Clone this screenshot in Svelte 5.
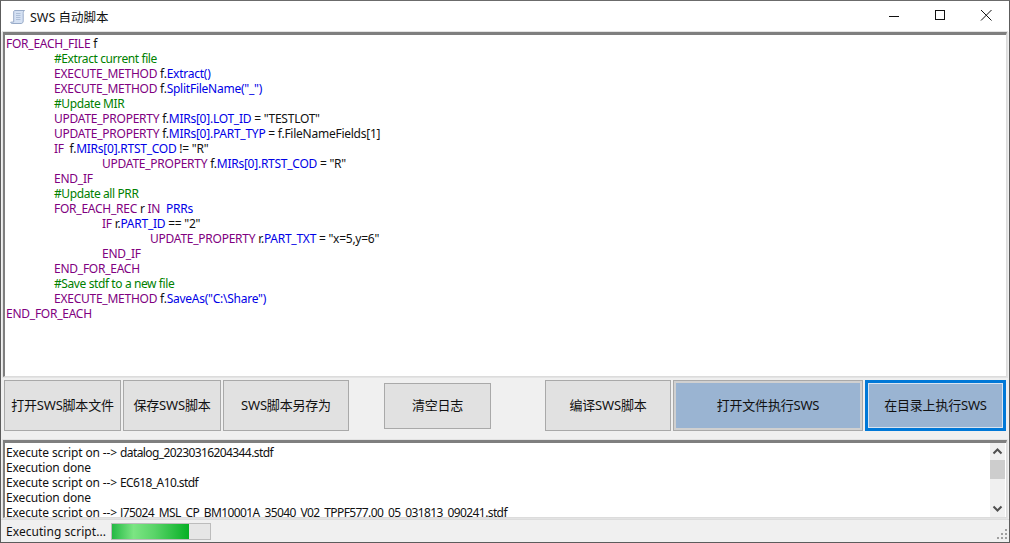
<script>
  // token kinds: k keyword, c comment, p property, t plain
  const code = [
    [0, [['k', 'FOR_EACH_FILE'], ['t', ' f']]],
    [1, [['c', '#Extract current file']]],
    [1, [['k', 'EXECUTE_METHOD'], ['t', ' f.'], ['p', 'Extract()']]],
    [1, [['k', 'EXECUTE_METHOD'], ['t', ' f.'], ['p', 'SplitFileName("_")']]],
    [1, [['c', '#Update MIR']]],
    [1, [['k', 'UPDATE_PROPERTY'], ['t', ' f.'], ['p', 'MIRs[0].LOT_ID'], ['t', ' = "TESTLOT"']]],
    [1, [['k', 'UPDATE_PROPERTY'], ['t', ' f.'], ['p', 'MIRs[0].PART_TYP'], ['t', ' = f.FileNameFields[1]']]],
    [1, [['k', 'IF'], ['t', '  f.'], ['p', 'MIRs[0].RTST_COD'], ['t', ' != "R"']]],
    [2, [['k', 'UPDATE_PROPERTY'], ['t', ' f.'], ['p', 'MIRs[0].RTST_COD'], ['t', ' = "R"']]],
    [1, [['k', 'END_IF']]],
    [1, [['c', '#Update all PRR']]],
    [1, [['k', 'FOR_EACH_REC'], ['t', ' r '], ['k', 'IN'], ['t', '  '], ['p', 'PRRs']]],
    [2, [['k', 'IF'], ['t', ' r.'], ['p', 'PART_ID'], ['t', ' == "2"']]],
    [3, [['k', 'UPDATE_PROPERTY'], ['t', ' r.'], ['p', 'PART_TXT'], ['t', ' = "x=5,y=6"']]],
    [2, [['k', 'END_IF']]],
    [1, [['k', 'END_FOR_EACH']]],
    [1, [['c', '#Save stdf to a new file']]],
    [1, [['k', 'EXECUTE_METHOD'], ['t', ' f.'], ['p', 'SaveAs("C:\\Share")']]],
    [0, [['k', 'END_FOR_EACH']]]
  ];

  const prefix = 'Execute script on --> ';
  const log = [
    { lead: prefix, file: 'datalog_20230316204344.stdf' },
    { lead: 'Execution done', file: '' },
    { lead: prefix, file: 'EC618_A10.stdf' },
    { lead: 'Execution done', file: '' },
    { lead: prefix, file: 'J75024_MSL_CP_BM10001A_35040_V02_TPPF577.00_05_031813_090241.stdf' }
  ];
  const progress = 79;
</script>

<div class="window">
  <header class="titlebar">
    <svg class="app-icon" width="16" height="16" viewBox="0 0 16 16">
      <path d="M4.500 1.500h10c-1 .6-1.300 1.600-1.300 3v7.500c0 1.400-.8 2.500-2 2.500H2.200c-.9 0-1.500-.6-1.500-1.300l3-.2V3c0-.7.200-1.200.8-1.500z" fill="#d5e1f3" stroke="#98abc8" stroke-width="1"/>
      <path d="M6 4.500h4.500M6 6.500h4.500M6 8.500h4.500M6 10.500h4.500" stroke="#aebfd8" stroke-width="1"/>
    </svg>
    <span class="title">SWS 自动脚本</span>
    <div class="controls">
      <svg width="46" height="32" viewBox="0 0 46 32"><path d="M18 16.500h10" stroke="#111" fill="none"/></svg>
      <svg width="46" height="32" viewBox="0 0 46 32"><rect x="18.500" y="10.500" width="9" height="9" stroke="#111" fill="none"/></svg>
      <svg width="46" height="32" viewBox="0 0 46 32"><path d="M18 10l10.500 10.500M28.500 10L18 20.500" stroke="#111" fill="none"/></svg>
    </div>
  </header>

  <div class="editor sunken">
    {#each code as [depth, tokens]}
      <div class="line" class:d1={depth === 1} class:d2={depth === 2} class:d3={depth === 3}>
        {#each tokens as [kind, text]}<span class={kind}>{text}</span>{/each}
      </div>
    {/each}
  </div>

  <div class="toolbar">
    <button class="b1">打开SWS脚本文件</button>
    <button class="b2">保存SWS脚本</button>
    <button class="b3">SWS脚本另存为</button>
    <button class="clear">清空日志</button>
    <button class="b5">编译SWS脚本</button>
    <button class="run">打开文件执行SWS</button>
    <button class="run focus">在目录上执行SWS</button>
  </div>

  <div class="log sunken">
    <div class="log-text">
      {#each log as row}
        <div class="log-line">{row.lead}<span class="file">{row.file}</span></div>
      {/each}
    </div>
    <div class="scrollbar">
      <svg width="15" height="17" viewBox="0 0 15 17"><path d="M3.500 10.500l4-4 4 4" stroke="#505050" stroke-width="2" fill="none"/></svg>
      <div class="track"><div class="thumb"></div></div>
      <svg width="15" height="17" viewBox="0 0 15 17"><path d="M3.500 6.500l4 4 4-4" stroke="#505050" stroke-width="2" fill="none"/></svg>
    </div>
  </div>

  <footer class="statusbar">
    <span class="status">Executing script...</span>
    <div class="progress"><div class="fill" style="width: {progress}%"></div></div>
    <svg class="grip" width="12" height="12" viewBox="0 0 12 12" fill="#a0a0a0">
      <rect x="8" y="0" width="2" height="2"/>
      <rect x="4" y="4" width="2" height="2"/><rect x="8" y="4" width="2" height="2"/>
      <rect x="0" y="8" width="2" height="2"/><rect x="4" y="8" width="2" height="2"/><rect x="8" y="8" width="2" height="2"/>
    </svg>
  </footer>
</div>

<style>
  :global(body) {
    margin: 0;
    background: #f0f0f0;
  }

  .window {
    box-sizing: border-box;
    width: 1010px;
    height: 543px;
    display: flex;
    flex-direction: column;
    border: 1px solid #5c5c5c;
    border-top-color: #6b6b6b;
    background: #f0f0f0;
    font-family: "Noto Sans", "Noto Sans CJK SC", sans-serif;
    font-size: 12px;
    color: #111;
  }

  .titlebar {
    flex: none;
    height: 31px;
    display: flex;
    align-items: center;
    background: #fff;
    padding-left: 9px;
  }

  .app-icon {
    margin-right: 4px;
  }

  .title {
    font-size: 12.500px;
    color: #111;
  }

  .controls {
    margin-left: auto;
    margin-top: -1px;
    display: flex;
  }

  .controls svg {
    display: block;
  }

  .sunken {
    margin: 0 2px 0 2px;
    background: #fff;
    border-top: 3px solid #7f7f7f;
    border-left: 2px solid #7f7f7f;
    border-right: 1px solid #dcdcdc;
    border-bottom: 1px solid #dcdcdc;
    outline: 1px solid #e3e3e3;
  }

  .editor {
    flex: none;
    height: 345px;
    padding: 1px 0 0 1px;
    box-sizing: border-box;
    overflow: hidden;
  }

  .line {
    height: 15px;
    line-height: 15px;
    white-space: pre;
    letter-spacing: -0.25px;
  }

  .log-line {
    height: 15px;
    line-height: 15px;
    white-space: pre;
    letter-spacing: -0.13px;
  }

  .file { letter-spacing: -0.6px; }

  .d1 { padding-left: 48px; }
  .d2 { padding-left: 96px; }
  .d3 { padding-left: 144px; }

  .k { color: #800080; }
  .c { color: #008000; letter-spacing: -0.4px; }
  .p { color: #0000e6; }
  .t { color: #111; }

  .toolbar {
    flex: none;
    height: 63px;
    box-sizing: border-box;
    padding: 3px 3px 0 3px;
    display: flex;
    align-items: flex-start;
    gap: 2px;
  }

  button {
    flex: none;
    height: 51px;
    box-sizing: border-box;
    padding: 0 0 3px;
    border: 1px solid #a9a9a9;
    background: #e1e1e1;
    font: inherit;
    font-size: 13px;
    color: #111;
    letter-spacing: -0.2px;
  }

  .b1 { width: 117px; }
  .b2 { width: 98px; }
  .b3 { width: 126px; }
  .clear {
    width: 107px;
    height: 46px;
    margin: 3px 52px 0 33px;
  }
  .b5 { width: 126px; }

  .run {
    width: 190px;
    background: #9ab4d2;
    border: 3px solid #d0d0d0;
    outline: 1px solid #a9a9a9;
    outline-offset: -1px;
  }

  .run.focus {
    width: 141px;
    border-color: #0078d7;
    box-shadow: inset 0 0 0 1px #d8e4f2;
    outline: none;
  }

  .log {
    flex: none;
    height: 78px;
    display: flex;
    box-sizing: border-box;
    overflow: hidden;
  }

  .log-text {
    flex: 1;
    padding: 2px 0 0 1px;
    overflow: hidden;
  }

  .scrollbar {
    flex: none;
    width: 15px;
    margin-right: 1px;
    display: flex;
    flex-direction: column;
    background: #f0f0f0;
  }

  .scrollbar svg {
    flex: none;
    display: block;
  }

  .track {
    flex: 1;
  }

  .thumb {
    height: 19px;
    background: #cdcdcd;
  }

  .statusbar {
    flex: 1;
    display: flex;
    align-items: center;
    padding-left: 5px;
    margin-top: 1px;
    border-top: 1px solid #dcdcdc;
    position: relative;
  }

  .status {
    width: 105px;
    flex: none;
    letter-spacing: 0.05px;
  }

  .progress {
    width: 100px;
    height: 17px;
    box-sizing: border-box;
    border: 1px solid #bcbcbc;
    background: #e6e6e6;
  }

  .fill {
    height: 100%;
    background: linear-gradient(90deg, #24b944 0%, #7ce583 28%, #5ad469 55%, #06b025 100%);
  }

  .grip {
    position: absolute;
    right: 0;
    bottom: 1px;
  }
</style>
